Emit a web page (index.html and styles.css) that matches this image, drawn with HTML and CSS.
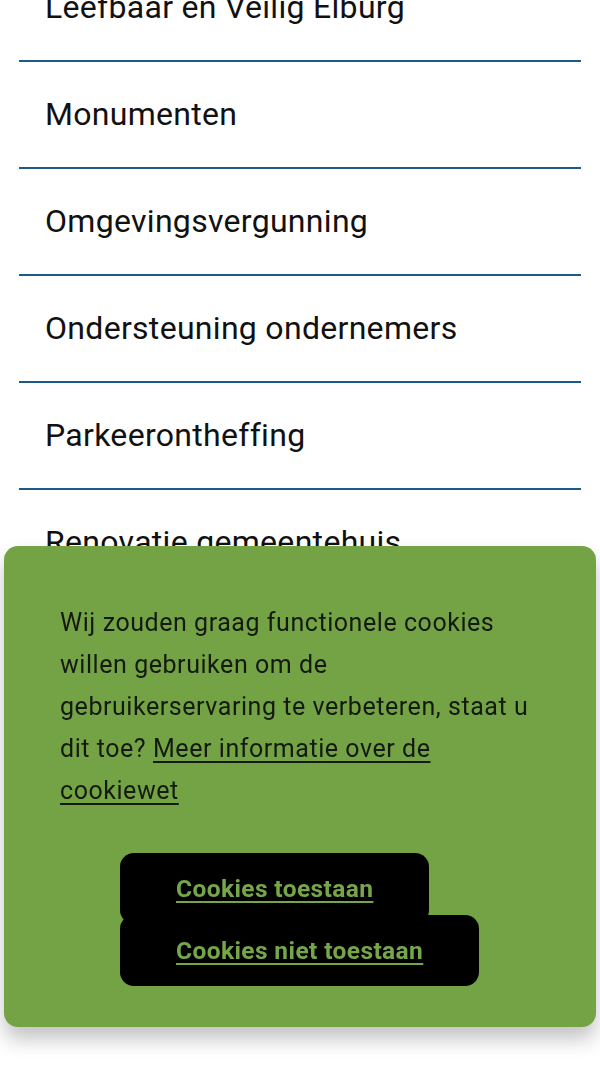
FILE: index.html
```html
<!DOCTYPE html>
<html lang="nl">
<head>
<meta charset="utf-8">
<title>Onderwerpen</title>
<link rel="stylesheet" href="styles.css">
</head>
<body>
<ul class="topics">
  <li class="topic"><a href="#">Leefbaar en Veilig Elburg</a></li>
  <li class="topic"><a href="#">Monumenten</a></li>
  <li class="topic"><a href="#">Omgevingsvergunning</a></li>
  <li class="topic"><a href="#">Ondersteuning ondernemers</a></li>
  <li class="topic"><a href="#">Parkeerontheffing</a></li>
  <li class="topic"><a href="#">Renovatie gemeentehuis</a></li>
  <li class="topic"><a href="#">Subsidies</a></li>
  <li class="topic"><a href="#">Verkiezingen</a></li>
  <li class="topic"><a href="#">Vluchtelingen</a></li>
  <li class="topic"><a href="#">Vuurwerk</a></li>
  <li class="topic"><a href="#">Wonen en bouwen</a></li>
</ul>

<div class="cookiebar" role="dialog">
  <p class="cookiebar-text">Wij zouden graag functionele cookies willen gebruiken om de gebruikerservaring te verbeteren, staat u dit toe? <a href="#" class="cookiebar-link">Meer informatie over de cookiewet</a></p>
  <div class="cookiebar-actions">
    <a href="#" class="cookie-btn">Cookies toestaan</a>
    <a href="#" class="cookie-btn cookie-btn-deny">Cookies niet toestaan</a>
  </div>
</div>
</body>
</html>
```
FILE: styles.css
```css
html, body {
  margin: 0;
  padding: 0;
  background: #ffffff;
}

body {
  font-family: Roboto, "Open Sans", sans-serif;
  color: #111111;
}

.topics {
  list-style: none;
  margin: -45px 19px 0;
  padding: 0;
}

.topic {
  border-bottom: 2px solid #1d5a85;
}

.topic a {
  display: block;
  padding: 32px 24px 32px 26px;
  font-size: 32px;
  line-height: 41px;
  letter-spacing: 0.3px;
  color: #111111;
  text-decoration: none;
}

.cookiebar {
  position: fixed;
  left: 4px;
  right: 4px;
  bottom: 38px;
  background: #74a345;
  border-radius: 14px;
  padding: 56px 56px 41px;
  box-shadow: 0 12px 20px rgba(0, 0, 0, 0.24);
}

.cookiebar-text {
  margin: 0 0 41px;
  width: 470px;
  font-size: 25px;
  line-height: 42px;
  letter-spacing: 0.55px;
  color: #141a10;
}

.cookiebar-link {
  color: #141a10;
  text-decoration: underline;
  text-decoration-thickness: 2px;
  text-underline-offset: 4px;
}

.cookiebar-actions {
  display: flex;
  flex-direction: column;
  align-items: flex-start;
  margin-left: 60px;
}

.cookie-btn {
  display: block;
  background: #000000;
  border-radius: 14px;
  padding: 21px 56px;
  font-size: 24.5px;
  line-height: 29px;
  font-weight: 700;
  letter-spacing: 0.4px;
  color: #76a648;
  text-decoration: underline;
  text-decoration-thickness: 2px;
  text-underline-offset: 4px;
}

.cookie-btn-deny {
  margin-top: -9px;
}
```
